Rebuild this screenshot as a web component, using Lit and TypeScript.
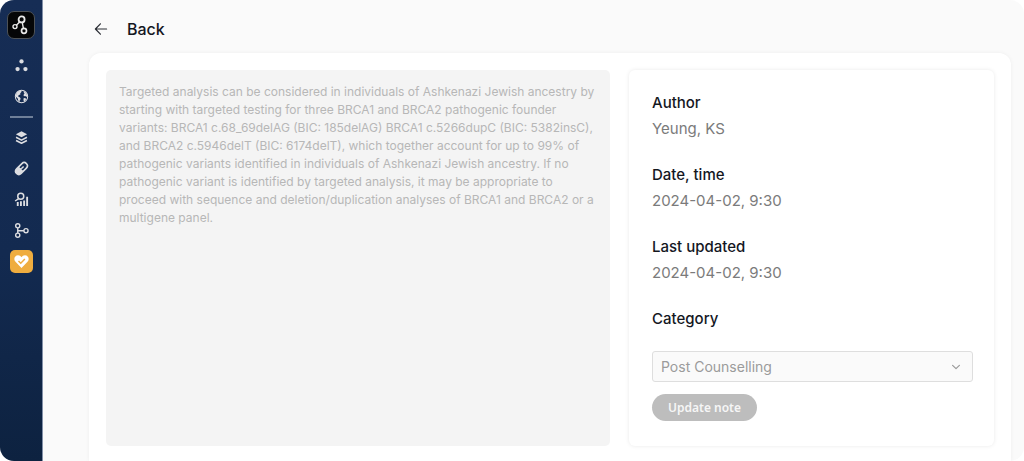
import { LitElement, html, css, svg, TemplateResult } from "lit";
import { customElement, property, state } from "lit/decorators.js";

const icons: Record<string, TemplateResult> = {
  dots: svg`<g fill="#dcdde1"><circle cx="8" cy="3.6" r="2.3"/><circle cx="3.8" cy="11.8" r="2.3"/><circle cx="12.2" cy="11.8" r="2.3"/></g>`,
  globe: svg`<circle cx="8" cy="8" r="6.6" fill="none" stroke="#dcdde1" stroke-width="1.1"/>
    <path fill="#dcdde1" d="M2 6.4 3.6 3 7.4 1.6 8.2 3 6.6 4.4 6.8 5.8 5 6.4 4.4 8 6.4 9 7.2 10.6 6.2 11.8 6 13.8 4.6 12.4 4 10 2 8.2ZM10 2.6 12.6 3.6 14.2 7 13.4 8.4 12 7.4 10.8 7.6 10 6.4 11.2 5ZM10.4 9.6 12.6 9.8 12.8 11.4 11 13.4 10 12Z"/>`,
  layers: svg`<path fill="#dcdde1" d="M8 1.2 14 4.5 8 7.8 2 4.5Z"/>
    <path fill="none" stroke="#dcdde1" stroke-width="1.7" stroke-linejoin="round" d="m2.2 7.8 5.8 3 5.8-3M2.2 11.2 8 14.2l5.8-3"/>`,
  pill: svg`<g transform="rotate(-45 8 8)"><rect x=".6" y="4.6" width="14.8" height="6.8" rx="3.4" fill="none" stroke="#dcdde1" stroke-width="1.7"/>
    <path fill="#dcdde1" d="M8 4.6H4a3.4 3.4 0 0 0 0 6.8h4l-1-2 1.2-1.4L7 6.4Z"/><path d="M7.6 8h3.6" stroke="#dcdde1" stroke-width="1.5"/></g>`,
  chart: svg`<g fill="none" stroke="#dcdde1"><circle cx="7.2" cy="4.6" r="3.2" stroke-width="1.6"/><path stroke-width="1.6" d="M5 7 1.2 9.6"/>
    <path stroke-width="2" d="M4 15v-4.4M7.4 15V9.8M10.8 15V9M14 15V5"/></g>`,
  branch: svg`<g fill="none" stroke="#dcdde1" stroke-width="1.5"><circle cx="4" cy="3" r="2.2"/><circle cx="4" cy="13" r="2.2"/><circle cx="12.8" cy="8.2" r="2.2"/>
    <path d="M4 5.2v5.6M4 8.2h6.6"/></g>`,
  heart: svg`<path fill="#fff" d="M8 14.8 1.6 8.4C-1 5.6.8 1.4 4.3 1.4c1.6 0 2.9.8 3.7 2.1.8-1.3 2.1-2.1 3.7-2.1 3.5 0 5.3 4.2 2.7 7Z"/>
    <path fill="none" stroke="#efad3f" stroke-width="1.6" d="m4.8 7.4 2.4 2.4 4.4-4.4"/>`,
};

@customElement("side-nav")
class SideNav extends LitElement {
  @property() active = "heart";

  static styles = css`
    :host {
      display: block;
      width: 42px;
      flex: none;
      border-right: 1px solid #8290a8;
      background: linear-gradient(#162d55, #132a50 55%, #0d2240);
    }
    nav {
      display: flex;
      flex-direction: column;
      align-items: center;
      padding-top: 11px;
      gap: 8px;
    }
    .item {
      display: flex;
      align-items: center;
      justify-content: center;
      width: 23px;
      height: 23px;
      border-radius: 5px;
    }
    .item svg {
      width: 15px;
      height: 15px;
    }
    .active {
      background: #efad3f;
    }
    .logo {
      box-sizing: border-box;
      width: 28px;
      height: 28px;
      margin-bottom: 7px;
      border: 1px solid #4d5257;
      border-radius: 7px;
      background: #050607;
    }
    .logo svg {
      width: 22px;
      height: 22px;
    }
    hr {
      width: 23px;
      height: 2px;
      margin: 0;
      border: 0;
      background: #6f7f98;
    }
  `;

  item(name: string, label: string) {
    return html`<a class="item ${name === this.active ? "active" : ""}" href="#${name}" aria-label=${label}>
      <svg viewBox="0 0 16 16">${icons[name]}</svg>
    </a>`;
  }

  render() {
    return html`<nav aria-label="Main">
      <a class="item logo" href="#home" aria-label="Home">
        <svg viewBox="0 0 22 22" fill="none" stroke="#e8e8e8">
          <circle cx="11.6" cy="5.4" r="3" stroke-width="1.8" />
          <circle cx="5" cy="12.6" r="2" stroke-width="1.4" />
          <circle cx="14" cy="16.8" r="2.5" stroke-width="1.7" />
          <path d="M9.8 7.8 6.4 11.2M12.2 8.4l1.2 5.8" stroke-width="1.4" />
        </svg>
      </a>
      ${this.item("dots", "Overview")} ${this.item("globe", "Global")}
      <hr />
      ${this.item("layers", "Layers")} ${this.item("pill", "Medication")} ${this.item("chart", "Analysis")}
      ${this.item("branch", "Pathways")} ${this.item("heart", "Counselling")}
    </nav>`;
  }
}

@customElement("app-root")
class AppRoot extends LitElement {
  @state() private note =
    "Targeted analysis can be considered in individuals of Ashkenazi Jewish ancestry by starting with targeted testing for three BRCA1 and BRCA2 pathogenic founder variants: BRCA1 c.68_69delAG (BIC: 185delAG) BRCA1 c.5266dupC (BIC: 5382insC), and BRCA2 c.5946delT (BIC: 6174delT), which together account for up to 99% of pathogenic variants identified in individuals of Ashkenazi Jewish ancestry. If no pathogenic variant is identified by targeted analysis, it may be appropriate to proceed with sequence and deletion/duplication analyses of BRCA1 and BRCA2 or a multigene panel.";

  private details = [
    ["Author", "Yeung, KS"],
    ["Date, time", "2024-04-02, 9:30"],
    ["Last updated", "2024-04-02, 9:30"],
  ];

  static styles = css`
    :host {
      display: flex;
      min-height: 100vh;
      border-radius: 14px;
      overflow: hidden;
      background: #fafafa;
      font-family: Inter, sans-serif;
      color: #14171f;
    }
    main {
      flex: 1;
      min-width: 0;
      display: flex;
      flex-direction: column;
      padding: 0 13px 0 46px;
    }
    .back {
      display: flex;
      align-items: center;
      align-self: flex-start;
      gap: 19px;
      height: 53px;
      padding: 5px 0 0 5px;
      box-sizing: border-box;
      color: inherit;
      text-decoration: none;
      font-size: 16px;
      font-weight: 500;
    }
    .back svg {
      width: 14px;
      height: 14px;
    }
    .card {
      flex: 1;
      display: grid;
      grid-template-columns: 504fr 365fr;
      gap: 19px;
      padding: 17px 17px 15px;
      border-radius: 12px 12px 0 0;
      background: #fff;
      box-shadow: 0 0 4px rgba(0, 0, 0, 0.05);
    }
    .note {
      display: block;
      box-sizing: border-box;
      width: 100%;
      height: 100%;
      padding: 13px;
      border: 0;
      border-radius: 5px;
      resize: none;
      background: #f4f4f4;
      color: #b7b7b7;
      font: 12px/18px Inter, sans-serif;
    }
    .panel {
      display: flex;
      flex-direction: column;
      padding: 23px 21px 25px 23px;
      border-radius: 6px;
      box-shadow: 0 0 4px rgba(0, 0, 0, 0.09);
    }
    dl {
      margin: 0;
    }
    dt,
    .label {
      font-size: 15px;
      line-height: 20px;
      font-weight: 500;
    }
    dd {
      margin: 6px 0 26px;
      font-size: 15px;
      line-height: 20px;
      color: #7b7b7b;
    }
    .picker {
      display: grid;
      align-items: center;
      margin: 22px 0 12px;
    }
    .picker > * {
      grid-area: 1 / 1;
    }
    select {
      appearance: none;
      width: 100%;
      height: 31px;
      padding: 0 8px;
      border: 1px solid #dedede;
      border-radius: 3px;
      background: #fafafa;
      color: #9b9b9b;
      font: 14px Inter, sans-serif;
      opacity: 1;
    }
    .chevron {
      width: 10px;
      height: 10px;
      margin-right: 12px;
      justify-self: end;
      pointer-events: none;
    }
    .update {
      align-self: flex-start;
      height: 27px;
      padding: 0 16px;
      border: 0;
      border-radius: 14px;
      background: #bdbdbd;
      color: #f6f6f6;
      font: 600 12px "Noto Sans", sans-serif;
    }
  `;

  render() {
    return html`
      <side-nav></side-nav>
      <main>
        <a class="back" href="#notes">
          <svg viewBox="0 0 14 14" fill="none" stroke="#2b2e35" stroke-width="1.2" stroke-linecap="round" stroke-linejoin="round">
            <path d="M12.6 7H1.6M6.4 1.8 1.4 7l5 5.2" />
          </svg>
          Back
        </a>
        <section class="card">
          <textarea class="note" aria-label="Note" disabled .value=${this.note}></textarea>
          <div class="panel">
            <dl>
              ${this.details.map(([name, value]) => html`<dt>${name}</dt><dd>${value}</dd>`)}
            </dl>
            <label class="label" for="category">Category</label>
            <div class="picker">
              <select id="category" disabled>
                <option>Post Counselling</option>
              </select>
              <svg class="chevron" viewBox="0 0 10 10" fill="none" stroke="#999" stroke-width="1.2" stroke-linecap="round" stroke-linejoin="round">
                <path d="m1.6 3.4 3.4 3.2 3.4-3.2" />
              </svg>
            </div>
            <button class="update" type="button" disabled>Update note</button>
          </div>
        </section>
      </main>
    `;
  }
}
